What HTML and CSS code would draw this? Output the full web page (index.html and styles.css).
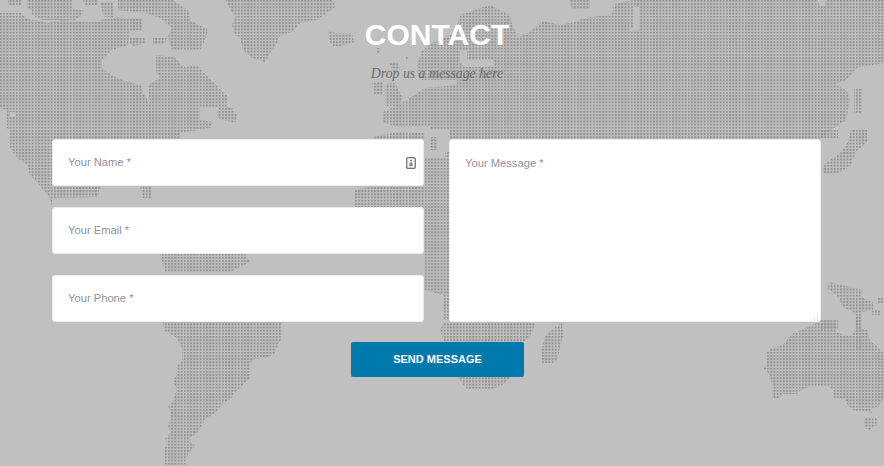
FILE: index.html
```html
<!DOCTYPE html>
<html lang="en">
<head>
<meta charset="UTF-8" />
<meta name="viewport" content="width=device-width, initial-scale=1.0"/>
<title>Contact</title>
<link rel="stylesheet" href="styles.css">
</head>
<body>
<!-- dotted world map behind the form -->
<svg class="map" width="884" height="466" viewBox="0 0 884 466" aria-hidden="true">
<defs>
<pattern id="dots" patternUnits="userSpaceOnUse" width="3.17" height="3.17">
<rect width="1.9" height="1.9" fill="#919191"/>
</pattern>
</defs>
<g fill="url(#dots)">
<!-- north america -->
<polygon points="0,13 21,13 27,19 40,21 48,23 62,20 75,21 95,22 108,18 118,17 143,19 142,30 130,31 128,45 112,50 102,60 102,68 113,76 127,82 142,85 143,93 150,104 148,85 160,78 156,72 156,55 175,57 183,67 198,65 208,77 218,87 228,97 226,107 200,108 200,120 213,122 210,128 180,133 180,139 52,139 52,207 48,195 40,186 30,175 27,165 20,160 15,155 10,148 10,130 7,128 7,110 0,108"/>
<polygon points="218,107 232,108 237,115 235,123 217,118"/>
<polygon points="52,186 100,186 98,197 52,198"/>
<polygon points="140,186 152,186 152,198 143,198"/>
<polygon points="8,0 22,0 22,5 8,5"/>
<polygon points="27,0 72,0 72,9 83,10 82,15 75,20 42,20 32,15 32,10 27,8"/>
<polygon points="83,0 98,0 98,5 85,5"/>
<polygon points="100,3 113,3 113,17 104,17"/>
<polygon points="118,0 173,0 190,12 190,20 208,30 205,40 200,50 172,50 168,36 172,28 160,18 145,13 118,10"/>
<polygon points="153,38 167,38 165,44 153,44"/>
<polygon points="130,37 146,38 146,43 134,46 130,44"/>
<!-- greenland and iceland -->
<polygon points="226,0 232,13 236,15 232,25 235,35 240,38 243,50 252,58 265,62 272,50 277,43 280,35 293,32 300,23 317,20 327,13 335,7 333,0"/>
<polygon points="328,29 335,33 352,33 354,42 340,46 333,46 329,40"/>
<!-- british isles -->
<polygon points="390,63 398,63 400,70 392,71"/>
<polygon points="372,83 383,82 383,95 374,95"/>
<polygon points="385,84 395,83 403,98 398,106 385,106"/>
<rect x="377" y="48" width="3" height="6"/>
<rect x="406" y="57" width="3" height="3"/>
<!-- eurasia -->
<polygon points="422,50 433,43 455,33 460,15 490,5 510,15 512,25 518,37 530,32 543,21 560,25 575,22 584,18 600,16 612,15 614,4 634,0 817,0 820,5 825,5 826,0 884,0 884,63 857,68 846,80 836,84 847,91 850,100 846,120 828,132 821,139 821,200 449,200 449,130 430,130 430,126 400,127 383,123 383,112 407,100 425,88 457,85 457,80 420,80 417,72 418,62"/>
<polygon points="570,0 590,0 590,9 572,9"/>
<polygon points="854,88 862,88 862,113 854,113"/>
<polygon points="851,130 867,130 867,142 855,153 853,160 850,167 838,173 823,173 823,165 833,158 840,153 848,142"/>
<polygon points="820,130 838,130 838,138 820,138"/>
<polygon points="373,137 398,132 425,133 425,139 373,139"/>
<!-- africa -->
<polygon points="425,158 449,158 449,320 443,320 443,295 424,290 424,207 355,207 355,190 370,187 425,186"/>
<polygon points="430,137 437,137 437,150 430,150"/>
<polygon points="445,152 449,152 449,157 445,157"/>
<polygon points="443,323 535,323 533,331 528,338 522,343 510,378 503,385 490,390 468,390 458,378 445,345 440,330"/>
<polygon points="562,323 563,336 560,348 557,360 553,363 542,363 542,349 545,336 552,329"/>
<!-- south america -->
<polygon points="160,254 245,254 250,262 230,272 165,272"/>
<polygon points="162,321 282,321 282,338 278,344 275,353 268,357 255,359 250,363 250,378 240,388 233,394 232,398 222,404 218,411 205,419 202,426 197,433 188,439 195,446 188,454 185,466 165,466 165,448 168,444 165,439 171,433 168,426 171,418 170,411 168,406 172,403 174,398 177,389 174,384 174,379 177,374 177,366 182,361 182,348 177,338 165,331"/>
<!-- south east asia and australia -->
<polygon points="827,288 830,283 828,282 863,290 860,297 873,302 873,310 862,312 862,350 855,350 855,313 843,307 838,297"/>
<polygon points="877,298 883,298 883,303 877,303"/>
<polygon points="872,310 880,310 880,315 872,315"/>
<polygon points="820,320 838,320 838,330 820,330"/>
<polygon points="767,351 773,348 783,345 792,334 803,329 817,323 838,321 835,331 845,336 852,336 855,329 855,316 860,316 860,328 867,329 870,341 877,346 884,354 884,396 880,406 872,409 872,414 868,411 855,411 848,406 845,399 833,398 833,389 827,386 810,386 800,391 797,394 782,394 780,398 772,398 772,391 773,388 770,376 767,371 763,368 767,366"/>
<polygon points="864,418 877,418 877,425 870,430 864,428"/>
</g>
<!-- inland seas -->
<g fill="#c0c0c0">
<polygon points="460,50 467,50 467,60 493,60 493,67 465,67 460,62"/>
<polygon points="634,7 639,7 639,30 630,32 628,28 634,28"/>
<polygon points="10,112 15,112 15,117 10,117"/>
</g>
</svg>

<div class="page">
<h1>CONTACT</h1>
<p class="subtitle">Drop us a message here</p>

<form class="contact-form">
<div class="form-cols">
<div class="fields">
<div class="field">
<input type="text" placeholder="Your Name *" />
<svg class="field-icon" width="10" height="12" viewBox="0 0 10 12" aria-hidden="true">
<rect x="0.7" y="0.7" width="8.6" height="10.6" rx="1.2" fill="#f2f2f2" stroke="#777" stroke-width="1.3"/>
<circle cx="5" cy="3.6" r="0.9" fill="#777"/>
<path d="M3.4 9.2 L3.4 7 Q3.4 5.3 5 5.3 Q6.6 5.3 6.6 7 L6.6 9.2 Z" fill="#888"/>
</svg>
</div>
<div class="field"><input type="email" placeholder="Your Email *" /></div>
<div class="field"><input type="text" placeholder="Your Phone *" /></div>
</div>
<textarea placeholder="Your Message *"></textarea>
</div>
<button type="button">SEND MESSAGE</button>
</form>
</div>
</body>
</html>
```

FILE: styles.css
```css
* {
box-sizing: border-box;
margin: 0;
padding: 0;
}

body {
font-family: 'Liberation Sans', Arial, sans-serif;
background: #c0c0c0;
height: 466px;
overflow: hidden;
padding-right: 11px;
}

.map {
position: absolute;
top: 0;
left: 0;
z-index: -1;
filter: blur(0.4px);
}

.page {
width: 769px;
margin: 0 auto;
padding-top: 18px;
text-align: center;
}

h1 {
font-size: 30px;
line-height: 34px;
font-weight: bold;
color: #fff;
padding-left: 1px;
}

.subtitle {
font-family: 'Liberation Serif', Georgia, serif;
font-style: italic;
font-size: 13.8px;
line-height: 20px;
color: #6f6a6a;
margin-top: 12px;
padding-left: 1px;
}

.contact-form {
margin-top: 55px;
}

.form-cols {
display: grid;
grid-template-columns: 372px 372px;
justify-content: space-between;
}

.fields {
display: flex;
flex-direction: column;
gap: 21px;
}

.field {
position: relative;
}

.field-icon {
position: absolute;
top: 18px;
right: 8px;
}

input,
textarea {
display: block;
width: 100%;
background: #fff;
border: 1px solid #ececec;
border-radius: 3px;
font-family: 'Liberation Sans', Arial, sans-serif;
font-size: 11.2px;
color: #333;
outline: none;
}

input {
height: 47px;
padding: 0 15px 2px;
}

textarea {
height: 183px;
padding: 16px 15px;
line-height: 14px;
}

textarea::-webkit-resizer {
background:
linear-gradient(135deg, #fff 50%, transparent 50%) right bottom / 9px 9px no-repeat,
repeating-linear-gradient(90deg, #e2e2e2 0 1px, #fff 1px 3px) right bottom / 9px 9px no-repeat,
#fff;
}

input::placeholder,
textarea::placeholder {
color: #92929c;
opacity: 1;
}

button {
display: block;
width: 173px;
height: 35px;
margin: 20px 0 0 299px;
padding-bottom: 2px;
background: #0079ad;
color: #fff;
border: none;
border-radius: 2px;
font-family: 'Liberation Sans', Arial, sans-serif;
font-size: 11px;
font-weight: bold;
cursor: pointer;
}
```
